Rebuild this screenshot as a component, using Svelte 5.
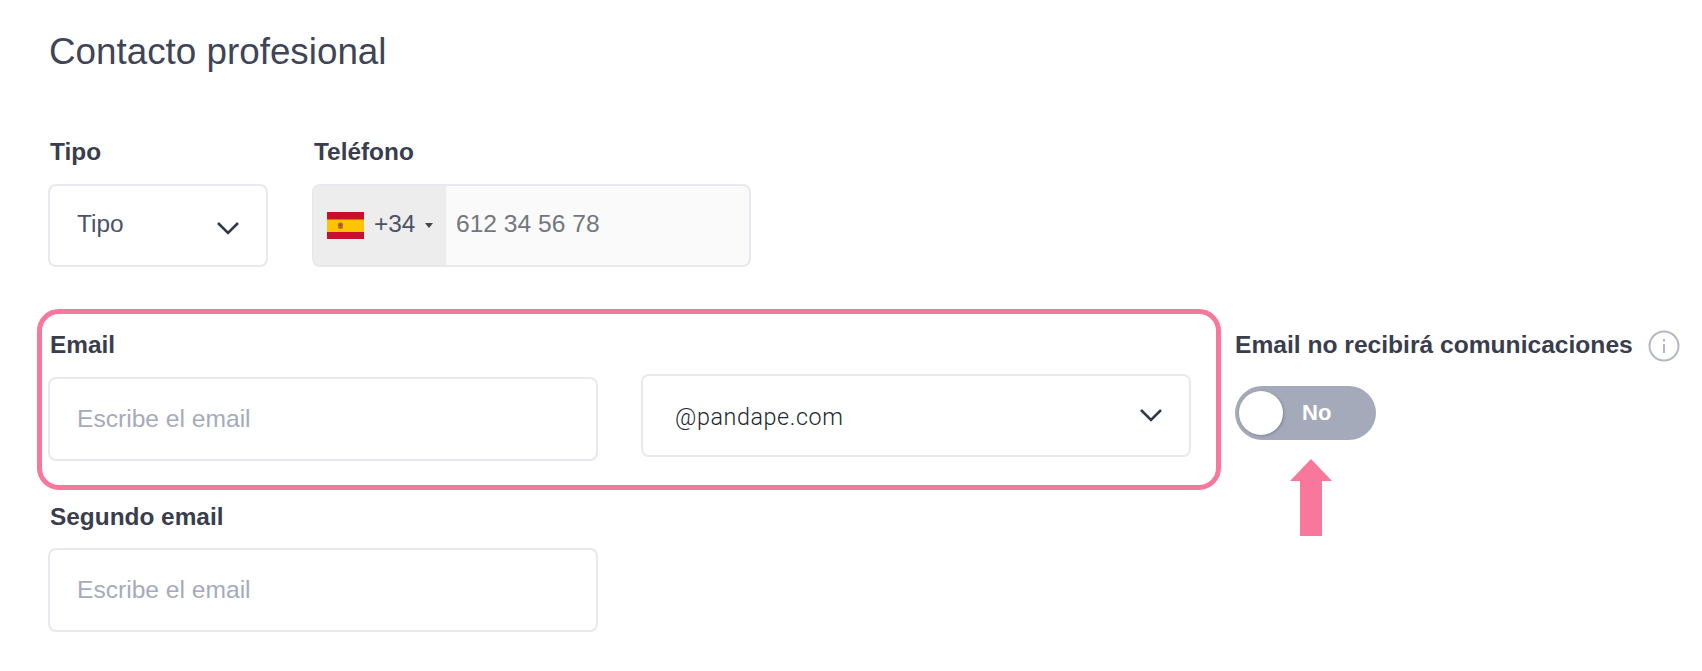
<script>
  const placeholder = 'Escribe el email';
</script>

{#snippet chevron()}
  <svg class="chevron" viewBox="0 0 24 14" aria-hidden="true">
    <path d="M2 2l10 10L22 2" />
  </svg>
{/snippet}

<main class="page">
  <h1>Contacto profesional</h1>

  <section class="row">
    <div class="field tipo">
      <span class="label">Tipo</span>
      <div class="control select">
        <span class="value">Tipo</span>
        {@render chevron()}
      </div>
    </div>

    <div class="field phone">
      <span class="label">Teléfono</span>
      <div class="control phone-box">
        <div class="country">
          <svg class="flag" viewBox="0 0 37 27" aria-hidden="true">
            <rect width="37" height="27" fill="#c8102e" />
            <rect y="7.5" width="37" height="12.5" fill="#ffc400" />
            <rect x="11" y="10.5" width="5" height="6.5" rx="2" fill="#b0702a" />
            <rect x="12" y="11.5" width="2.5" height="2.5" fill="#c8402e" />
          </svg>
          <span class="dial">+34</span>
          <span class="caret"></span>
        </div>
        <span class="number">612 34 56 78</span>
      </div>
    </div>
  </section>

  <section class="row email-row">
    <div class="highlight"></div>
    <div class="field email">
      <span class="label">Email</span>
      <div class="control"><input type="text" {placeholder} /></div>
    </div>
    <div class="control select domain">
      <span class="domain-value">@pandape.com</span>
      {@render chevron()}
    </div>
    <div class="notice">
      <div class="notice-head">
        <span class="label">Email no recibirá comunicaciones</span>
        <svg class="info" viewBox="0 0 32 32" aria-hidden="true">
          <circle cx="16" cy="16" r="14.5" />
          <path d="M16 14v9M16 9v2.5" />
        </svg>
      </div>
      <div class="toggle">
        <span class="knob"></span>
        <span class="toggle-text">No</span>
      </div>
      <svg class="arrow" viewBox="0 0 44 77" aria-hidden="true">
        <path d="M22 0l21 22H33v55H11V22H1z" />
      </svg>
    </div>
  </section>

  <section class="second">
    <div class="field email">
      <span class="label">Segundo email</span>
      <div class="control"><input type="text" {placeholder} /></div>
    </div>
  </section>
</main>

<style>
  :global(body) {
    margin: 0;
    background: #fff;
  }

  .page {
    width: 1702px;
    height: 671px;
    box-sizing: border-box;
    padding: 30px 0 0 48px;
    font-family: "Liberation Sans", Arial, sans-serif;
    color: #3a3f4f;
    overflow: hidden;
  }

  h1 {
    margin: 0 0 0 1px;
    font-size: 36.8px;
    line-height: 44px;
    font-weight: 400;
    color: #3f4557;
  }

  .row {
    display: flex;
    gap: 44px;
    margin-top: 64px;
  }

  .field {
    display: flex;
    flex-direction: column;
  }

  .label {
    display: block;
    height: 28px;
    margin: 0 0 18px 2px;
    font-size: 24.4px;
    line-height: 28px;
    font-weight: 700;
    color: #3a3d4d;
    white-space: nowrap;
  }

  .control {
    box-sizing: border-box;
    height: 83px;
    border: 2px solid #e8e8ee;
    border-radius: 8px;
    background: #fff;
  }

  .select {
    display: flex;
    align-items: center;
    justify-content: space-between;
    padding: 0 26px 0 27px;
  }

  .tipo {
    width: 220px;
  }

  .value {
    margin-bottom: 3px;
    font-size: 24.4px;
    color: #4b5268;
  }

  .chevron {
    width: 24px;
    height: 14px;
    margin-top: 4px;
    fill: none;
    stroke: #2f3b48;
    stroke-width: 2.6;
  }

  .phone {
    width: 439px;
  }

  .phone-box {
    display: flex;
    align-items: center;
    overflow: hidden;
    background: #fafafa;
  }

  .country {
    display: flex;
    align-items: center;
    box-sizing: border-box;
    width: 132px;
    height: 100%;
    padding-left: 13px;
    background: #ededed;
  }

  .flag {
    width: 37px;
    height: 27px;
    flex-shrink: 0;
  }

  .dial {
    margin: 0 0 3px 10px;
    font-size: 24.4px;
    color: #4b5268;
  }

  .caret {
    margin-left: 10px;
    border: 4.5px solid transparent;
    border-top: 5px solid #444;
    border-bottom: 0;
  }

  .number {
    margin: 0 0 3px 10px;
    font-size: 24.6px;
    color: #72777f;
  }

  .email-row {
    position: relative;
    gap: 43px;
    margin-top: 64px;
    align-items: flex-start;
  }

  .highlight {
    position: absolute;
    left: -11px;
    top: -22px;
    width: 1184px;
    height: 181px;
    box-sizing: border-box;
    border: 5px solid #f7789a;
    border-radius: 22px;
    pointer-events: none;
  }

  .email {
    width: 550px;
  }

  .email .control {
    height: 84px;
  }

  .email input {
    box-sizing: border-box;
    display: block;
    width: 100%;
    height: 100%;
    padding: 0 27px;
    border: 0;
    border-radius: 8px;
    outline: none;
    background: transparent;
    font-family: inherit;
    font-size: 24.6px;
    color: #3a3d4d;
  }

  .email input::placeholder {
    color: #a5abbb;
    opacity: 1;
  }

  .domain {
    width: 550px;
    height: 83px;
    margin-top: 43px;
    padding: 0 26px 0 32px;
  }

  .domain .chevron {
    margin: 0 0 1px;
  }

  .domain-value {
    margin-top: 2px;
    font-family: Roboto, "Liberation Sans", sans-serif;
    font-size: 23.3px;
    font-weight: 300;
    letter-spacing: 0.6px;
    color: #23272f;
  }

  .notice {
    position: relative;
    margin-left: 1px;
  }

  .notice-head {
    display: flex;
    align-items: flex-start;
    gap: 15px;
    height: 28px;
  }

  .notice-head .label {
    margin: 0;
    font-size: 24.6px;
  }

  .info {
    width: 32px;
    height: 32px;
    margin-top: -1px;
    flex-shrink: 0;
    fill: none;
    stroke: #b5b8c4;
    stroke-width: 2;
  }

  .toggle {
    display: flex;
    align-items: center;
    width: 141px;
    height: 54px;
    margin-top: 27px;
    padding: 0 4px;
    box-sizing: border-box;
    border-radius: 27px;
    background: #a5aaba;
  }

  .knob {
    width: 44px;
    height: 44px;
    border-radius: 50%;
    background: #fff;
    box-shadow: 1px 1px 3px rgba(60, 65, 85, 0.35);
  }

  .toggle-text {
    margin-left: 19px;
    font-size: 22px;
    font-weight: 700;
    color: #fff;
  }

  .arrow {
    position: absolute;
    left: 54px;
    top: 128px;
    width: 44px;
    height: 77px;
    fill: #f7789a;
  }

  .second {
    margin-top: 42px;
  }

  .second .label {
    margin-bottom: 17px;
  }
</style>
